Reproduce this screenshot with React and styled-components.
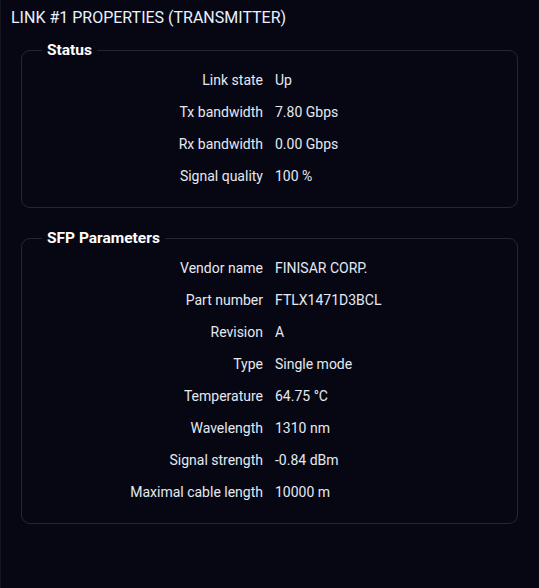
import React from "react"
import styled, { createGlobalStyle } from "styled-components"

const status = [
    ["Link state", "Up"],
    ["Tx bandwidth", "7.80 Gbps"],
    ["Rx bandwidth", "0.00 Gbps"],
    ["Signal quality", "100 %"],
]

const sfp = [
    ["Vendor name", "FINISAR CORP."],
    ["Part number", "FTLX1471D3BCL"],
    ["Revision", "A"],
    ["Type", "Single mode"],
    ["Temperature", "64.75 °C"],
    ["Wavelength", "1310 nm"],
    ["Signal strength", "-0.84 dBm"],
    ["Maximal cable length", "10000 m"],
]

const GlobalStyle = createGlobalStyle`
    html, body {
        margin: 0;
        padding: 0;
        background: #070713;
    }
    body {
        font-family: Roboto, "Liberation Sans", sans-serif;
        color: #e4e9f2;
    }
`

const Section = ({ title, rows }) => (
    <Group>
        <Legend>{title}</Legend>
        <Rows>
            {rows.map(([label, value]) => (
                <React.Fragment key={label}>
                    <Label>{label}</Label>
                    <Value>{value}</Value>
                </React.Fragment>
            ))}
        </Rows>
    </Group>
)

const App = () => (
    <Page>
        <GlobalStyle />
        <Title>LINK #1 PROPERTIES (TRANSMITTER)</Title>
        <Section title="Status" rows={status} />
        <Section title="SFP Parameters" rows={sfp} />
    </Page>
)

const Page = styled.div`
    box-sizing: border-box;
    width: 539px;
    height: 588px;
    padding: 8px 21px 0 20px;
    border-left: 1px solid #15151f;
    display: flex;
    flex-direction: column;
    gap: 20px;
`

const Title = styled.h1`
    margin: 0 0 -8px -10px;
    font-size: 16px;
    line-height: 20px;
    font-weight: 400;
    color: #eaf1ff;
`

const Group = styled.fieldset`
    margin: 0;
    padding: 4px 0 15px 0;
    border: 1px solid #262633;
    border-radius: 9px;
    min-width: 0;
`

const Legend = styled.legend`
    margin-left: 20px;
    padding: 0 5px;
    font-size: 15.5px;
    line-height: 20px;
    font-weight: 700;
    color: #ffffff;
`

const Rows = styled.div`
    display: grid;
    grid-template-columns: 241px 1fr;
    column-gap: 12px;
    grid-auto-rows: 32px;
    align-items: center;
    font-size: 14px;
`

const Label = styled.div`
    text-align: right;
    color: #e4e9f2;
`

const Value = styled.div`
    color: #e4e9f2;
`

export default App
